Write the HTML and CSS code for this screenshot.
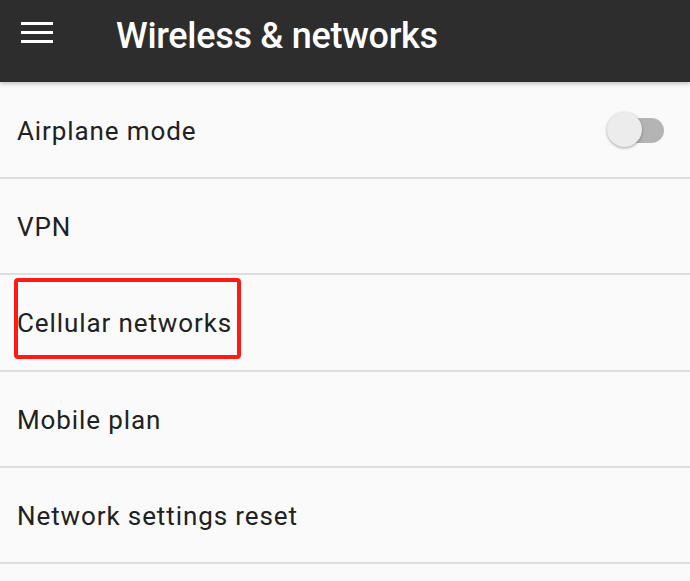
FILE: index.html
```html
<!DOCTYPE html>
<html>
<head>
<meta charset="utf-8">
<link rel="stylesheet" href="styles.css">
</head>
<body>
<header class="appbar">
  <svg class="menu" width="32" height="21" viewBox="0 0 32 21"><rect x="0" y="0" width="32" height="3" fill="#fff"/><rect x="0" y="9" width="32" height="3" fill="#fff"/><rect x="0" y="18" width="32" height="3" fill="#fff"/></svg>
  <h1 class="title">Wireless &amp; networks</h1>
</header>
<main class="list">
  <div class="row first">
    <span class="label">Airplane mode</span>
    <span class="switch"><span class="track"></span><span class="thumb"></span></span>
  </div>
  <div class="row"><span class="label">VPN</span></div>
  <div class="row marked"><span class="label">Cellular networks</span></div>
  <div class="row"><span class="label">Mobile plan</span></div>
  <div class="row"><span class="label">Network settings reset</span></div>
</main>
</body>
</html>
```
FILE: styles.css
```css
html, body { margin: 0; padding: 0; }
body {
  width: 690px;
  height: 581px;
  overflow: hidden;
  background: #fafafa;
  font-family: Roboto, "Noto Sans", sans-serif;
  color: #212121;
}
.appbar {
  height: 82px;
  box-sizing: border-box;
  background: #2d2d2d;
  display: flex;
  align-items: flex-start;
  padding-left: 21px;
  box-shadow: 0 2px 4px rgba(0,0,0,0.22);
  position: relative;
  z-index: 1;
}
.menu { display: block; margin-top: 22px; }
.title {
  margin: 14px 0 0 63px;
  font-size: 36px;
  line-height: 44px;
  font-weight: 500;
  color: #fff;
  letter-spacing: -0.3px;
}
.list { display: flex; flex-direction: column; }
.row {
  height: 94.25px;
  border-bottom: 2px solid #dedede;
  display: flex;
  align-items: center;
  padding: 0 17px;
  justify-content: space-between;
}
.row.first { height: 95px; }
.label {
  font-size: 26px;
  letter-spacing: 0.9px;
  margin-top: 2px;
}
.marked { position: relative; }
.marked::after {
  content: "";
  position: absolute;
  left: 14px;
  top: 3px;
  width: 227px;
  height: 81px;
  box-sizing: border-box;
  border: 4px solid #ff1a14;
  border-radius: 4px;
}
.switch {
  position: relative;
  width: 57px;
  height: 36px;
  margin-right: 9px;
  display: block;
}
.track {
  position: absolute;
  left: 10px;
  right: 0;
  top: 6px;
  height: 25px;
  border-radius: 13px;
  background: #b4b4b4;
}
.thumb {
  position: absolute;
  left: 0;
  top: 0;
  width: 35px;
  height: 35px;
  border-radius: 50%;
  background: #ececec;
  box-shadow: 0 1px 3px rgba(0,0,0,0.35);
}
```
